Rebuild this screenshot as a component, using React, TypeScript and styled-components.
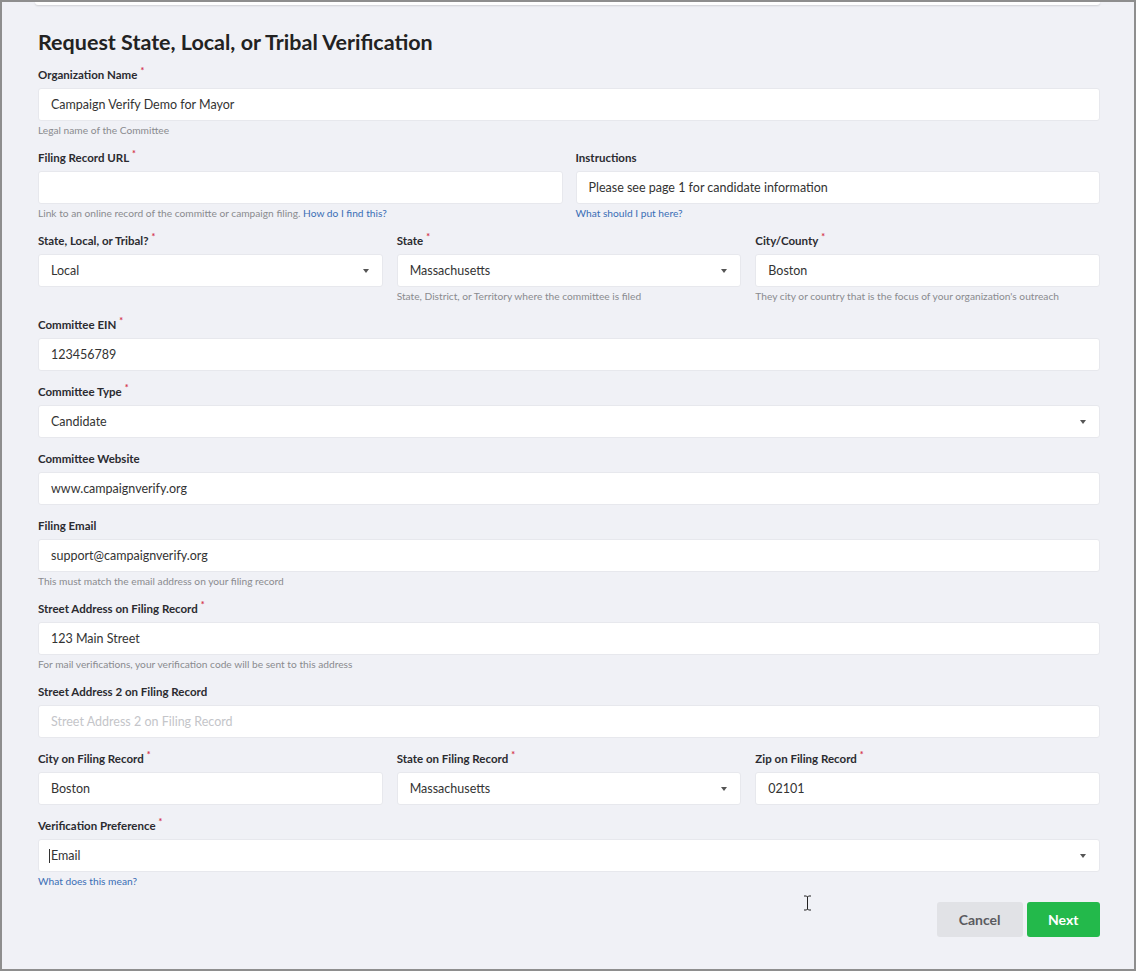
import styled, { createGlobalStyle } from "styled-components";

const GlobalStyle = createGlobalStyle`
  html, body {
    margin: 0;
    padding: 0;
    background: #f0f1f6;
  }
  * {
    box-sizing: border-box;
  }
`

const Frame = styled.div`
  position: relative;
  width: 1136px;
  height: 971px;
  border: 2px solid #8e8e8e;
  background: #f0f1f6;
  padding: 0 34px 0 36px;
  font-family: Lato, "Open Sans", sans-serif;
  color: #333;
  overflow: hidden;
`

const PrevCard = styled.div`
  margin-left: -3px;
  height: 3px;
  background: #fff;
  border-radius: 0 0 4px 4px;
  box-shadow: 0 1px 2px rgba(0, 0, 0, 0.14);
`

const Title = styled.h1`
  margin: 25px 0 0;
  font-size: 21.5px;
  line-height: 24px;
  font-weight: 700;
  color: #222;
`

const Form = styled.div`
  display: flex;
  flex-direction: column;
  gap: 13px;
  margin-top: 13px;
`

const Row = styled.div<{ $cols: number; $gap: number }>`
  display: grid;
  grid-template-columns: repeat(${p => p.$cols}, 1fr);
  column-gap: ${p => p.$gap}px;
  align-items: start;
`

const Field = styled.div`
  display: flex;
  flex-direction: column;
`

const Label = styled.label`
  display: block;
  font-size: 11.5px;
  line-height: 16px;
  font-weight: 700;
  color: #2b2b30;
  margin-bottom: 5px;
`

const Required = styled.sup`
  color: #d4344c;
  font-size: 9px;
  margin-left: 3px;
  vertical-align: 5px;
  line-height: 0;
`

const Input = styled.div<{ $placeholder?: boolean }>`
  position: relative;
  display: flex;
  align-items: center;
  height: 33px;
  padding: 0 12px;
  background: #fff;
  border: 1px solid #e7e8ed;
  border-radius: 3px;
  font-size: 12.5px;
  color: ${p => (p.$placeholder ? "#c4c5c9" : "#333")};
`

const Caret = styled.span`
  position: absolute;
  right: 13px;
  top: 14px;
  width: 0;
  height: 0;
  border-left: 3.5px solid transparent;
  border-right: 3.5px solid transparent;
  border-top: 4px solid #555;
`

const TextCursor = styled.span`
  display: inline-block;
  width: 1px;
  height: 14px;
  background: #333;
  margin-left: -2px;
  margin-right: 1px;
`

const Hint = styled.div`
  margin-top: 3px;
  font-size: 10.2px;
  line-height: 13.2px;
  color: #8a8b8f;
`

const HelpLink = styled.a`
  color: #3a6eb5;
  text-decoration: none;
`

const Actions = styled.div`
  display: flex;
  justify-content: flex-end;
  gap: 4px;
  margin-top: 14px;
`

const Button = styled.button<{ $primary?: boolean }>`
  height: 35px;
  padding: 0 ${p => (p.$primary ? 21.5 : 22)}px;
  border: none;
  border-radius: 3px;
  font-family: Lato, "Open Sans", sans-serif;
  font-size: 14px;
  font-weight: 700;
  background: ${p => (p.$primary ? "#23b94b" : "#e1e2e6")};
  color: ${p => (p.$primary ? "#fff" : "#5a5b60")};
`

const MouseCursor = styled.svg`
  position: absolute;
  left: 801px;
  top: 893px;
`

type FieldProps = {
  label: string;
  required?: boolean;
  value?: string;
  placeholder?: string;
  select?: boolean;
  hint?: React.ReactNode;
  focused?: boolean;
};

const FormField = ({ label, required, value, placeholder, select, hint, focused }: FieldProps) => (
  <Field>
    <Label>
      {label}
      {required && <Required>*</Required>}
    </Label>
    <Input $placeholder={!value && !!placeholder}>
      {focused && <TextCursor />}
      {value || placeholder}
      {select && <Caret />}
    </Input>
    {hint && <Hint>{hint}</Hint>}
  </Field>
);

export default function App() {
  return (
    <>
      <GlobalStyle />
      <Frame>
        <PrevCard />
        <Title>Request State, Local, or Tribal Verification</Title>
        <Form>
          <FormField
            label="Organization Name"
            required
            value="Campaign Verify Demo for Mayor"
            hint="Legal name of the Committee"
          />
          <Row $cols={2} $gap={13}>
            <FormField
              label="Filing Record URL"
              required
              hint={
                <>
                  Link to an online record of the committe or campaign filing.{" "}
                  <HelpLink href="#">How do I find this?</HelpLink>
                </>
              }
            />
            <FormField
              label="Instructions"
              value="Please see page 1 for candidate information"
              hint={<HelpLink href="#">What should I put here?</HelpLink>}
            />
          </Row>
          <Row $cols={3} $gap={14}>
            <FormField label="State, Local, or Tribal?" required value="Local" select />
            <FormField
              label="State"
              required
              value="Massachusetts"
              select
              hint="State, District, or Territory where the committee is filed"
            />
            <FormField
              label="City/County"
              required
              value="Boston"
              hint="They city or country that is the focus of your organization's outreach"
            />
          </Row>
          <FormField label="Committee EIN" required value="123456789" />
          <FormField label="Committee Type" required value="Candidate" select />
          <FormField label="Committee Website" value="www.campaignverify.org" />
          <FormField
            label="Filing Email"
            value="support@campaignverify.org"
            hint="This must match the email address on your filing record"
          />
          <FormField
            label="Street Address on Filing Record"
            required
            value="123 Main Street"
            hint="For mail verifications, your verification code will be sent to this address"
          />
          <FormField
            label="Street Address 2 on Filing Record"
            placeholder="Street Address 2 on Filing Record"
          />
          <Row $cols={3} $gap={14}>
            <FormField label="City on Filing Record" required value="Boston" />
            <FormField label="State on Filing Record" required value="Massachusetts" select />
            <FormField label="Zip on Filing Record" required value="02101" />
          </Row>
          <FormField
            label="Verification Preference"
            required
            value="Email"
            select
            focused
            hint={<HelpLink href="#">What does this mean?</HelpLink>}
          />
        </Form>
        <Actions>
          <Button>Cancel</Button>
          <Button $primary>Next</Button>
        </Actions>
        <MouseCursor width="9" height="16" viewBox="0 0 9 16">
          <path d="M1 1h2.5L4.5 2 5.5 1H8M4.5 2v12M1 15h2.5l1-1 1 1H8" fill="none" stroke="#222" strokeWidth="1" />
        </MouseCursor>
      </Frame>
    </>
  );
}
